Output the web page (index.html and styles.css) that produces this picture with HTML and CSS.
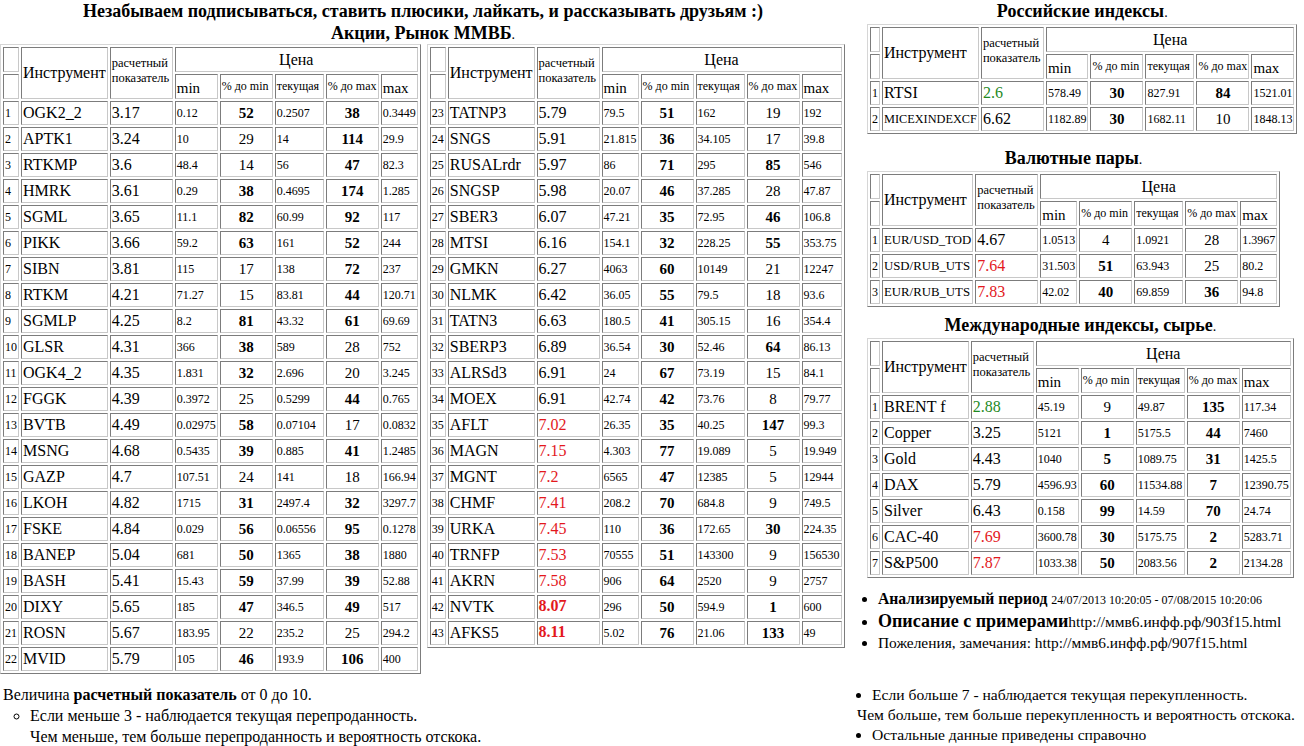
FILE: index.html
```html
<!DOCTYPE html>
<html lang="ru">
<head>
<meta charset="utf-8">
<title>Акции, Рынок ММВБ</title>
<link rel="stylesheet" href="styles.css">
</head>
<body>
<div class="page">
  <div class="top">
    <section class="stocks">
      <h1 class="title">Незабываем подписываться, ставить плюсики, лайкать, и рассказывать друзьям :)</h1>
      <h2 class="title">Акции, Рынок ММВБ<span class="dot">.</span></h2>
      <div class="stock-tables">
        <table class="grid">
          <tr><th class="n"></th><th class="h-inst" rowspan="2">Инструмент</th><th class="h-calc" rowspan="2">расчетный<br>показатель</th><th class="h-price" colspan="5">Цена</th></tr>
          <tr><th class="n"></th><th class="h-mm">min</th><th class="h-sm h-pct">% до min</th><th class="h-sm h-cur">текущая</th><th class="h-sm h-pct">% до max</th><th class="h-mm">max</th></tr>
          <tr><td class="n">1</td><td class="nm">OGK2_2</td><td class="v">3.17</td><td class="s">0.12</td><td class="p b">52</td><td class="s">0.2507</td><td class="p b">38</td><td class="s">0.3449</td></tr>
          <tr><td class="n">2</td><td class="nm">APTK1</td><td class="v">3.24</td><td class="s">10</td><td class="p">29</td><td class="s">14</td><td class="p b">114</td><td class="s">29.9</td></tr>
          <tr><td class="n">3</td><td class="nm">RTKMP</td><td class="v">3.6</td><td class="s">48.4</td><td class="p">14</td><td class="s">56</td><td class="p b">47</td><td class="s">82.3</td></tr>
          <tr><td class="n">4</td><td class="nm">HMRK</td><td class="v">3.61</td><td class="s">0.29</td><td class="p b">38</td><td class="s">0.4695</td><td class="p b">174</td><td class="s">1.285</td></tr>
          <tr><td class="n">5</td><td class="nm">SGML</td><td class="v">3.65</td><td class="s">11.1</td><td class="p b">82</td><td class="s">60.99</td><td class="p b">92</td><td class="s">117</td></tr>
          <tr><td class="n">6</td><td class="nm">PIKK</td><td class="v">3.66</td><td class="s">59.2</td><td class="p b">63</td><td class="s">161</td><td class="p b">52</td><td class="s">244</td></tr>
          <tr><td class="n">7</td><td class="nm">SIBN</td><td class="v">3.81</td><td class="s">115</td><td class="p">17</td><td class="s">138</td><td class="p b">72</td><td class="s">237</td></tr>
          <tr><td class="n">8</td><td class="nm">RTKM</td><td class="v">4.21</td><td class="s">71.27</td><td class="p">15</td><td class="s">83.81</td><td class="p b">44</td><td class="s">120.71</td></tr>
          <tr><td class="n">9</td><td class="nm">SGMLP</td><td class="v">4.25</td><td class="s">8.2</td><td class="p b">81</td><td class="s">43.32</td><td class="p b">61</td><td class="s">69.69</td></tr>
          <tr><td class="n">10</td><td class="nm">GLSR</td><td class="v">4.31</td><td class="s">366</td><td class="p b">38</td><td class="s">589</td><td class="p">28</td><td class="s">752</td></tr>
          <tr><td class="n">11</td><td class="nm">OGK4_2</td><td class="v">4.35</td><td class="s">1.831</td><td class="p b">32</td><td class="s">2.696</td><td class="p">20</td><td class="s">3.245</td></tr>
          <tr><td class="n">12</td><td class="nm">FGGK</td><td class="v">4.39</td><td class="s">0.3972</td><td class="p">25</td><td class="s">0.5299</td><td class="p b">44</td><td class="s">0.765</td></tr>
          <tr><td class="n">13</td><td class="nm">BVTB</td><td class="v">4.49</td><td class="s">0.02975</td><td class="p b">58</td><td class="s">0.07104</td><td class="p">17</td><td class="s">0.0832</td></tr>
          <tr><td class="n">14</td><td class="nm">MSNG</td><td class="v">4.68</td><td class="s">0.5435</td><td class="p b">39</td><td class="s">0.885</td><td class="p b">41</td><td class="s">1.2485</td></tr>
          <tr><td class="n">15</td><td class="nm">GAZP</td><td class="v">4.7</td><td class="s">107.51</td><td class="p">24</td><td class="s">141</td><td class="p">18</td><td class="s">166.94</td></tr>
          <tr><td class="n">16</td><td class="nm">LKOH</td><td class="v">4.82</td><td class="s">1715</td><td class="p b">31</td><td class="s">2497.4</td><td class="p b">32</td><td class="s">3297.7</td></tr>
          <tr><td class="n">17</td><td class="nm">FSKE</td><td class="v">4.84</td><td class="s">0.029</td><td class="p b">56</td><td class="s">0.06556</td><td class="p b">95</td><td class="s">0.1278</td></tr>
          <tr><td class="n">18</td><td class="nm">BANEP</td><td class="v">5.04</td><td class="s">681</td><td class="p b">50</td><td class="s">1365</td><td class="p b">38</td><td class="s">1880</td></tr>
          <tr><td class="n">19</td><td class="nm">BASH</td><td class="v">5.41</td><td class="s">15.43</td><td class="p b">59</td><td class="s">37.99</td><td class="p b">39</td><td class="s">52.88</td></tr>
          <tr><td class="n">20</td><td class="nm">DIXY</td><td class="v">5.65</td><td class="s">185</td><td class="p b">47</td><td class="s">346.5</td><td class="p b">49</td><td class="s">517</td></tr>
          <tr><td class="n">21</td><td class="nm">ROSN</td><td class="v">5.67</td><td class="s">183.95</td><td class="p">22</td><td class="s">235.2</td><td class="p">25</td><td class="s">294.2</td></tr>
          <tr><td class="n">22</td><td class="nm">MVID</td><td class="v">5.79</td><td class="s">105</td><td class="p b">46</td><td class="s">193.9</td><td class="p b">106</td><td class="s">400</td></tr>
        </table>
        <table class="grid">
          <tr><th class="n"></th><th class="h-inst" rowspan="2">Инструмент</th><th class="h-calc" rowspan="2">расчетный<br>показатель</th><th class="h-price" colspan="5">Цена</th></tr>
          <tr><th class="n"></th><th class="h-mm">min</th><th class="h-sm h-pct">% до min</th><th class="h-sm h-cur">текущая</th><th class="h-sm h-pct">% до max</th><th class="h-mm">max</th></tr>
          <tr><td class="n">23</td><td class="nm">TATNP3</td><td class="v">5.79</td><td class="s">79.5</td><td class="p b">51</td><td class="s">162</td><td class="p">19</td><td class="s">192</td></tr>
          <tr><td class="n">24</td><td class="nm">SNGS</td><td class="v">5.91</td><td class="s">21.815</td><td class="p b">36</td><td class="s">34.105</td><td class="p">17</td><td class="s">39.8</td></tr>
          <tr><td class="n">25</td><td class="nm">RUSALrdr</td><td class="v">5.97</td><td class="s">86</td><td class="p b">71</td><td class="s">295</td><td class="p b">85</td><td class="s">546</td></tr>
          <tr><td class="n">26</td><td class="nm">SNGSP</td><td class="v">5.98</td><td class="s">20.07</td><td class="p b">46</td><td class="s">37.285</td><td class="p">28</td><td class="s">47.87</td></tr>
          <tr><td class="n">27</td><td class="nm">SBER3</td><td class="v">6.07</td><td class="s">47.21</td><td class="p b">35</td><td class="s">72.95</td><td class="p b">46</td><td class="s">106.8</td></tr>
          <tr><td class="n">28</td><td class="nm">MTSI</td><td class="v">6.16</td><td class="s">154.1</td><td class="p b">32</td><td class="s">228.25</td><td class="p b">55</td><td class="s">353.75</td></tr>
          <tr><td class="n">29</td><td class="nm">GMKN</td><td class="v">6.27</td><td class="s">4063</td><td class="p b">60</td><td class="s">10149</td><td class="p">21</td><td class="s">12247</td></tr>
          <tr><td class="n">30</td><td class="nm">NLMK</td><td class="v">6.42</td><td class="s">36.05</td><td class="p b">55</td><td class="s">79.5</td><td class="p">18</td><td class="s">93.6</td></tr>
          <tr><td class="n">31</td><td class="nm">TATN3</td><td class="v">6.63</td><td class="s">180.5</td><td class="p b">41</td><td class="s">305.15</td><td class="p">16</td><td class="s">354.4</td></tr>
          <tr><td class="n">32</td><td class="nm">SBERP3</td><td class="v">6.89</td><td class="s">36.54</td><td class="p b">30</td><td class="s">52.46</td><td class="p b">64</td><td class="s">86.13</td></tr>
          <tr><td class="n">33</td><td class="nm">ALRSd3</td><td class="v">6.91</td><td class="s">24</td><td class="p b">67</td><td class="s">73.19</td><td class="p">15</td><td class="s">84.1</td></tr>
          <tr><td class="n">34</td><td class="nm">MOEX</td><td class="v">6.91</td><td class="s">42.74</td><td class="p b">42</td><td class="s">73.76</td><td class="p">8</td><td class="s">79.77</td></tr>
          <tr><td class="n">35</td><td class="nm">AFLT</td><td class="v hi">7.02</td><td class="s">26.35</td><td class="p b">35</td><td class="s">40.25</td><td class="p b">147</td><td class="s">99.3</td></tr>
          <tr><td class="n">36</td><td class="nm">MAGN</td><td class="v hi">7.15</td><td class="s">4.303</td><td class="p b">77</td><td class="s">19.089</td><td class="p">5</td><td class="s">19.949</td></tr>
          <tr><td class="n">37</td><td class="nm">MGNT</td><td class="v hi">7.2</td><td class="s">6565</td><td class="p b">47</td><td class="s">12385</td><td class="p">5</td><td class="s">12944</td></tr>
          <tr><td class="n">38</td><td class="nm">CHMF</td><td class="v hi">7.41</td><td class="s">208.2</td><td class="p b">70</td><td class="s">684.8</td><td class="p">9</td><td class="s">749.5</td></tr>
          <tr><td class="n">39</td><td class="nm">URKA</td><td class="v hi">7.45</td><td class="s">110</td><td class="p b">36</td><td class="s">172.65</td><td class="p b">30</td><td class="s">224.35</td></tr>
          <tr><td class="n">40</td><td class="nm">TRNFP</td><td class="v hi">7.53</td><td class="s">70555</td><td class="p b">51</td><td class="s">143300</td><td class="p">9</td><td class="s">156530</td></tr>
          <tr><td class="n">41</td><td class="nm">AKRN</td><td class="v hi">7.58</td><td class="s">906</td><td class="p b">64</td><td class="s">2520</td><td class="p">9</td><td class="s">2757</td></tr>
          <tr><td class="n">42</td><td class="nm">NVTK</td><td class="v top">8.07</td><td class="s">296</td><td class="p b">50</td><td class="s">594.9</td><td class="p b">1</td><td class="s">600</td></tr>
          <tr><td class="n">43</td><td class="nm">AFKS5</td><td class="v top">8.11</td><td class="s">5.02</td><td class="p b">76</td><td class="s">21.06</td><td class="p b">133</td><td class="s">49</td></tr>
        </table>
      </div>
    </section>

    <aside class="side">
      <table class="grid">
        <caption class="cap">Российские индексы<span class="dot">.</span></caption>
        <tr><th class="n"></th><th class="h-inst" rowspan="2">Инструмент</th><th class="h-calc" rowspan="2">расчетный<br>показатель</th><th class="h-price" colspan="5">Цена</th></tr>
        <tr><th class="n"></th><th class="h-mm">min</th><th class="h-sm h-pct">% до min</th><th class="h-sm h-cur">текущая</th><th class="h-sm h-pct">% до max</th><th class="h-mm">max</th></tr>
        <tr><td class="n">1</td><td class="nm">RTSI</td><td class="v lo">2.6</td><td class="s">578.49</td><td class="p b">30</td><td class="s">827.91</td><td class="p b">84</td><td class="s">1521.01</td></tr>
        <tr><td class="n">2</td><td class="nm nm-s">MICEXINDEXCF</td><td class="v">6.62</td><td class="s">1182.89</td><td class="p b">30</td><td class="s">1682.11</td><td class="p">10</td><td class="s">1848.13</td></tr>
      </table>

      <table class="grid gap-lg">
        <caption class="cap">Валютные пары<span class="dot">.</span></caption>
        <tr><th class="n"></th><th class="h-inst" rowspan="2">Инструмент</th><th class="h-calc" rowspan="2">расчетный<br>показатель</th><th class="h-price" colspan="5">Цена</th></tr>
        <tr><th class="n"></th><th class="h-mm">min</th><th class="h-sm h-pct">% до min</th><th class="h-sm h-cur">текущая</th><th class="h-sm h-pct">% до max</th><th class="h-mm">max</th></tr>
        <tr><td class="n">1</td><td class="nm nm-c">EUR/USD_TOD</td><td class="v">4.67</td><td class="s">1.0513</td><td class="p">4</td><td class="s">1.0921</td><td class="p">28</td><td class="s">1.3967</td></tr>
        <tr><td class="n">2</td><td class="nm nm-c">USD/RUB_UTS</td><td class="v hi">7.64</td><td class="s">31.503</td><td class="p b">51</td><td class="s">63.943</td><td class="p">25</td><td class="s">80.2</td></tr>
        <tr><td class="n">3</td><td class="nm nm-c">EUR/RUB_UTS</td><td class="v hi">7.83</td><td class="s">42.02</td><td class="p b">40</td><td class="s">69.859</td><td class="p b">36</td><td class="s">94.8</td></tr>
      </table>

      <table class="grid gap-md">
        <caption class="cap">Международные индексы, сырье<span class="dot">.</span></caption>
        <tr><th class="n"></th><th class="h-inst" rowspan="2">Инструмент</th><th class="h-calc" rowspan="2">расчетный<br>показатель</th><th class="h-price" colspan="5">Цена</th></tr>
        <tr><th class="n"></th><th class="h-mm">min</th><th class="h-sm h-pct">% до min</th><th class="h-sm h-cur">текущая</th><th class="h-sm h-pct">% до max</th><th class="h-mm">max</th></tr>
        <tr><td class="n">1</td><td class="nm">BRENT f</td><td class="v lo">2.88</td><td class="s">45.19</td><td class="p">9</td><td class="s">49.87</td><td class="p b">135</td><td class="s">117.34</td></tr>
        <tr><td class="n">2</td><td class="nm">Copper</td><td class="v">3.25</td><td class="s">5121</td><td class="p b">1</td><td class="s">5175.5</td><td class="p b">44</td><td class="s">7460</td></tr>
        <tr><td class="n">3</td><td class="nm">Gold</td><td class="v">4.43</td><td class="s">1040</td><td class="p b">5</td><td class="s">1089.75</td><td class="p b">31</td><td class="s">1425.5</td></tr>
        <tr><td class="n">4</td><td class="nm">DAX</td><td class="v">5.79</td><td class="s">4596.93</td><td class="p b">60</td><td class="s">11534.88</td><td class="p b">7</td><td class="s">12390.75</td></tr>
        <tr><td class="n">5</td><td class="nm">Silver</td><td class="v">6.43</td><td class="s">0.158</td><td class="p b">99</td><td class="s">14.59</td><td class="p b">70</td><td class="s">24.74</td></tr>
        <tr><td class="n">6</td><td class="nm">CAC-40</td><td class="v hi">7.69</td><td class="s">3600.78</td><td class="p b">30</td><td class="s">5175.75</td><td class="p b">2</td><td class="s">5283.71</td></tr>
        <tr><td class="n">7</td><td class="nm">S&amp;P500</td><td class="v hi">7.87</td><td class="s">1033.38</td><td class="p b">50</td><td class="s">2083.56</td><td class="p b">2</td><td class="s">2134.28</td></tr>
      </table>

      <ul class="info">
        <li><b class="k-period">Анализируемый период</b> <span class="date">24/07/2013 10:20:05 - 07/08/2015 10:20:06</span></li>
        <li><b class="k-desc">Описание с примерами</b>http://ммв6.инфф.рф/903f15.html</li>
        <li>Пожеления, замечания: http://ммв6.инфф.рф/907f15.html</li>
      </ul>
    </aside>
  </div>

  <div class="notes">
    <div class="notes-left">
      <p class="line">Величина <b>расчетный показатель</b> от 0 до 10.</p>
      <ul class="circles">
        <li>Если меньше 3 - наблюдается текущая перепроданность.<br>Чем меньше, тем больше перепроданность и вероятность отскока.</li>
      </ul>
    </div>
    <div class="notes-right">
      <ul class="dots"><li>Если больше 7 - наблюдается текущая перекупленность.</li></ul>
      <p class="line">Чем больше, тем больше перекупленность и вероятность отскока.</p>
      <ul class="dots"><li>Остальные данные приведены справочно</li></ul>
    </div>
  </div>
</div>
</body>
</html>
```

FILE: styles.css
```css
html, body {
  margin: 0;
  padding: 0;
  background: #ffffff;
  color: #000000;
  font-family: "Liberation Serif", "Times New Roman", "DejaVu Serif", serif;
}

.page {
  width: 1304px;
}

.top {
  display: flex;
  align-items: flex-start;
}

.stocks {
  width: 846px;
  flex: none;
}

.title {
  margin: 0;
  height: 22px;
  font-size: 18px;
  font-weight: bold;
  line-height: 22px;
  text-align: center;
  white-space: nowrap;
}

.dot {
  font-weight: normal;
  font-size: 14px;
  line-height: 0;
}

.stock-tables {
  display: flex;
  align-items: flex-start;
  gap: 6px;
}

.side {
  margin-left: 21px;
  flex: none;
}

/* classic bordered data grid */
.grid {
  border-collapse: separate;
  border-spacing: 2px;
  border: 1px solid;
  border-color: #d6d6d6 #7c7c7c #7c7c7c #d6d6d6;
}

.grid td,
.grid th {
  border: 1px solid;
  border-color: #7c7c7c #c8c8c8 #c8c8c8 #7c7c7c;
  padding: 1px;
  height: 20px;
  font-weight: normal;
  text-align: left;
  vertical-align: middle;
  white-space: nowrap;
}

.grid th {
  height: 21px;
}

.cap {
  height: 22px;
  font-size: 18px;
  font-weight: bold;
  line-height: 22px;
  padding-top: 0;
  padding-bottom: 2px;
  text-align: center;
  white-space: nowrap;
}

.gap-lg {
  margin-top: 13px;
}

.gap-md {
  margin-top: 7px;
}

/* header cells */
.grid .h-inst {
  font-size: 16px;
}

.grid .h-calc {
  width: 59px;
  font-size: 12.5px;
  line-height: 15px;
  padding-bottom: 6px;
}

.grid .h-price {
  font-size: 16px;
  text-align: center;
}

.grid .h-mm {
  font-size: 15px;
  line-height: 17px;
  vertical-align: bottom;
}

.grid .h-sm {
  font-size: 12px;
}

.grid .h-pct {
  width: 49px;
}

.grid .h-cur {
  width: 45px;
}

/* body cells */
.grid .n {
  font-size: 12px;
}

.grid .nm {
  font-size: 16px;
}

.grid .nm-s {
  font-size: 12.3px;
}

.grid .nm-c {
  font-size: 12.8px;
}

.grid .v {
  font-size: 16px;
}

.grid .v.hi {
  color: #e3181d;
}

.grid .v.top {
  color: #e3181d;
  font-weight: bold;
}

.grid .v.lo {
  color: #1f8a1f;
}

.grid .s {
  font-size: 12px;
}

.grid .p {
  font-size: 15px;
  text-align: center;
}

.grid .p.b {
  font-weight: bold;
}

/* info list under the side tables */
.info {
  margin: 10px 0 0 0;
  padding-left: 11px;
  list-style: disc;
  font-size: 15.4px;
  line-height: 21px;
  white-space: nowrap;
}

.k-period {
  font-size: 15.7px;
}

.date {
  font-size: 12px;
}

.k-desc {
  font-size: 18px;
  line-height: 18px;
}

/* notes under everything */
.notes {
  display: flex;
  margin-top: 10px;
  font-size: 16px;
}

.notes-left {
  width: 857px;
  flex: none;
  padding-left: 3px;
  box-sizing: border-box;
  line-height: 21px;
}

.notes-right {
  font-size: 15.6px;
  line-height: 20px;
  padding-top: 1px;
  white-space: nowrap;
}

.line {
  margin: 0;
}

.circles {
  margin: 0;
  padding-left: 27px;
  list-style: circle;
}

.dots {
  margin: 0;
  padding-left: 15px;
  list-style: disc;
}
```
